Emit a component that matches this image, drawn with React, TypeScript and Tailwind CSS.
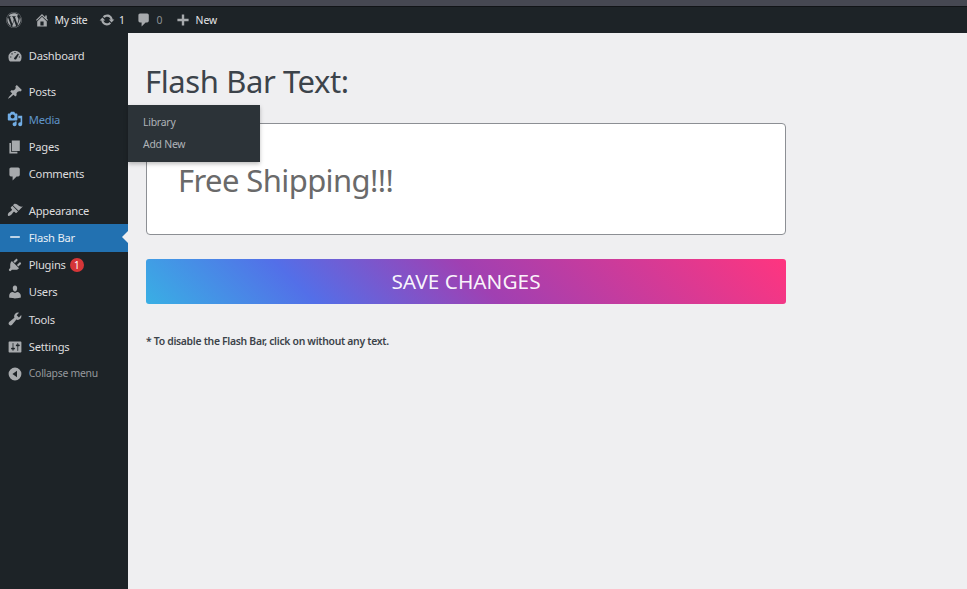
import { FaWordpress } from 'react-icons/fa';

const icons = {
  home: 'M16 8.5l1.53 1.53-1.06 1.06L10 4.6l-6.47 6.49-1.06-1.06L10 2.5l4 4v-2h2v4zm-6-2.46l6 5.99V18H4v-5.97zM12 17v-5H8v5h4z',
  update: 'M10.2 3.28c3.53 0 6.43 2.61 6.92 6h2.08l-3.5 4-3.5-4h2.32c-.45-1.97-2.21-3.45-4.32-3.45-1.45 0-2.73.71-3.54 1.78L4.95 5.66C6.23 4.2 8.11 3.28 10.2 3.28zm-.4 13.44c-3.52 0-6.43-2.61-6.92-6H.8l3.5-4c1.17 1.33 2.33 2.67 3.5 4H5.48c.45 1.97 2.21 3.45 4.32 3.45 1.45 0 2.73-.71 3.54-1.78l1.71 1.95c-1.28 1.46-3.15 2.38-5.25 2.38z',
  comments: 'M5 2h9c1.1 0 2 .9 2 2v7c0 1.1-.9 2-2 2h-2l-5 5v-5H5c-1.1 0-2-.9-2-2V4c0-1.1.9-2 2-2z',
  plus: 'M17 8.5v3h-5.5V17h-3v-5.5H3v-3h5.5V3h3v5.5z',
  dashboard: 'M3.76 17h12.48A8.2 8.2 0 1 0 3.76 17zM9.3 5h1.4v1.4H9.3zM5.6 6.7H7v1.4H5.6zM13.6 7L14.9 7.7 11.7 13.8A1.7 1.7 0 0 1 8.7 12.8zM4 10.6h1.4V12H4zM14.8 10.6h1.4V12h-1.4z',
  posts: 'M10.44 3.02l1.82-1.82 6.36 6.35-1.83 1.82c-1.05-.68-2.48-.57-3.41.36l-.75.75c-.92.93-1.04 2.35-.35 3.41l-1.83 1.82-2.41-2.41-2.8 2.79c-.42.42-3.38 2.71-3.8 2.29s1.86-3.39 2.28-3.81l2.79-2.79L4.1 9.36l1.83-1.82c1.05.69 2.48.57 3.4-.36l.75-.75c.93-.92 1.05-2.35.36-3.41z',
  media: 'M13 11V4c0-.55-.45-1-1-1h-1.67L9 1H5L3.67 3H2c-.55 0-1 .45-1 1v7c0 .55.45 1 1 1h10c.55 0 1-.45 1-1zM7 4.5c1.38 0 2.5 1.12 2.5 2.5S8.38 9.5 7 9.5 4.5 8.38 4.5 7 5.62 4.5 7 4.5zM14 6h5v10.5c0 1.38-1.12 2.5-2.5 2.5S14 17.88 14 16.5s1.12-2.5 2.5-2.5c.17 0 .34.02.5.05V9h-3V6zm-4 8.05V13h2v3.5c0 1.38-1.12 2.5-2.5 2.5S7 17.88 7 16.5 8.12 14 9.5 14c.17 0 .34.02.5.05z',
  pages: 'M6 15V2h10v13H6zm-1 1h8v2H3V5h2v11z',
  appearance: 'M14.48 11.06L7.41 3.99l1.5-1.5c.5-.56 2.3-.47 3.51.32 1.21.8 1.43 1.28 2.91 2.1 1.18.64 2.45 1.26 4.45.85zm-.71.71L6.7 4.7 4.93 6.47c-.39.39-.39 1.02 0 1.41l1.06 1.06c.39.39.39 1.03 0 1.42-.6.6-1.43 1.11-2.21 1.69-.35.26-.7.53-1.01.84C1.43 14.23.4 16.08 1.4 17.07c.99 1 2.84-.03 4.18-1.36.31-.31.58-.66.85-1.02.57-.78 1.08-1.61 1.69-2.21.39-.39 1.02-.39 1.41 0l1.06 1.06c.39.39 1.02.39 1.41 0z',
  minus: 'M4 9h12v2H4z',
  plugins: 'M13.11 4.36L9.87 7.6 8 5.73l3.24-3.24c.35-.34 1.05-.2 1.56.32.52.51.66 1.21.31 1.55zm-8 1.77l.91-1.12 9.01 9.01-1.19.84c-.71.71-2.63 1.16-3.82 1.16H6.14L4.9 17.26c-.59.59-1.54.59-2.12 0-.59-.58-.59-1.53 0-2.12l1.24-1.24v-3.88c0-1.13.4-3.19 1.09-3.89zm7.26 3.97l3.24-3.24c.34-.35 1.04-.21 1.55.31.52.51.66 1.21.31 1.55l-3.24 3.25z',
  users: 'M10 9.25c-2.27 0-2.73-3.44-2.73-3.44C7 4.02 7.82 2 9.97 2c2.16 0 2.98 2.02 2.71 3.81 0 0-.41 3.44-2.68 3.44zM10 11.2L12.72 10c2.39 0 4.52 2.33 4.52 4.53v2.49s-3.65 1.13-7.24 1.13c-3.65 0-7.24-1.13-7.24-1.13v-2.49c0-2.25 1.94-4.48 4.47-4.48z',
  tools: 'M16.68 9.77c-1.34 1.34-3.3 1.67-4.95.99l-5.41 6.52c-.99.99-2.59.99-3.58 0s-.99-2.59 0-3.57l6.52-5.42c-.68-1.65-.35-3.61.99-4.95 1.28-1.28 3.12-1.62 4.72-1.06l-2.89 2.89 2.82 2.82 2.86-2.87c.53 1.58.18 3.39-1.08 4.65z',
  settings: 'M18 16V4c0-.55-.45-1-1-1H3c-.55 0-1 .45-1 1v12c0 .55.45 1 1 1h14c.55 0 1-.45 1-1zM8 11h1c.55 0 1 .45 1 1s-.45 1-1 1H8v1.5c0 .28-.22.5-.5.5s-.5-.22-.5-.5V13H6c-.55 0-1-.45-1-1s.45-1 1-1h1V5.5c0-.28.22-.5.5-.5s.5.22.5.5V11zm5-2h-1c-.55 0-1-.45-1-1s.45-1 1-1h1V5.5c0-.28.22-.5.5-.5s.5.22.5.5V7h1c.55 0 1 .45 1 1s-.45 1-1 1h-1v5.5c0 .28-.22.5-.5.5s-.5-.22-.5-.5V9z',
  collapse: 'M10 2a8 8 0 1 0 0 16a8 8 0 1 0 0-16zM12.5 5.8v8.4L6.8 10z',
};

type IconName = keyof typeof icons;

function Icon({ name, className = '' }: { name: IconName; className?: string }) {
  return (
    <svg viewBox="0 0 20 20" fill="currentColor" fillRule="evenodd" className={`size-4 shrink-0 ${className}`}>
      <path d={icons[name]} />
    </svg>
  );
}

type Item = { icon: IconName; label: string; state?: 'hover' | 'current'; badge?: string };

const groups: Item[][] = [
  [{ icon: 'dashboard', label: 'Dashboard' }],
  [
    { icon: 'posts', label: 'Posts' },
    { icon: 'media', label: 'Media', state: 'hover' },
    { icon: 'pages', label: 'Pages' },
    { icon: 'comments', label: 'Comments' },
  ],
  [
    { icon: 'appearance', label: 'Appearance' },
    { icon: 'minus', label: 'Flash Bar', state: 'current' },
    { icon: 'plugins', label: 'Plugins', badge: '1' },
    { icon: 'users', label: 'Users' },
    { icon: 'tools', label: 'Tools' },
    { icon: 'settings', label: 'Settings' },
  ],
];

function MenuItem({ item }: { item: Item }) {
  const color =
    item.state === 'hover' ? 'text-[#72aee6]' : item.state === 'current' ? 'bg-[#2271b1] text-[#e6eef5]' : 'text-[#dcdcde]';
  const iconColor = item.state ? '' : 'text-[#a7aaad]';
  return (
    <li className={`relative flex h-[27.3px] items-center pl-[6.8px] ${color}`}>
      <Icon name={item.icon} className={`-mt-px ${iconColor}`} />
      <span className={`ml-[6px] pt-[0.6px] tracking-[-0.25px] ${item.state === 'hover' ? 'text-[#5f94c9]' : ''}`}>{item.label}</span>
      {item.badge && (
        <span className="ml-1 flex size-[14.4px] items-center justify-center rounded-full bg-[#d63638] text-[10px] text-white">
          {item.badge}
        </span>
      )}
      {item.state === 'current' && (
        <span className="absolute right-0 top-[7px] border-y-[6.4px] border-r-[6.4px] border-y-transparent border-r-[#efeff1]" />
      )}
      {item.state === 'hover' && (
        <ul className="absolute left-32 top-[-1.2px] z-10 flex h-[57px] w-[132px] flex-col bg-[#2c3338] pl-[15px] pt-[6px] text-[10.4px] leading-[22px] tracking-[-0.22px] text-[#b0b4b8] shadow-[0_2px_4px_rgba(0,0,0,0.25)]">
          <li>Library</li>
          <li>Add New</li>
        </ul>
      )}
    </li>
  );
}

export default function App() {
  return (
    <div className="flex h-[589px] w-[967px] flex-col overflow-hidden bg-[#efeff1] font-['Noto_Sans',sans-serif] text-[#3c434a]">
      <div className="h-[7px] shrink-0 border-b border-[#111417] bg-[#464852]" />
      <header className="flex h-[26px] shrink-0 items-center bg-[#1d2327] pl-[5.5px] text-[10.4px] text-[#e6e6e8]">
        <FaWordpress className="size-4 text-[#a7aaad]" />
        <Icon name="home" className="ml-[12px] text-[#a7aaad]" />
        <span className="ml-[5px] w-[33px] whitespace-nowrap pt-px tracking-[-0.25px]">My site</span>
        <Icon name="update" className="ml-[11.5px] text-[#a7aaad]" />
        <span className="ml-1 w-[6px] pt-px">1</span>
        <Icon name="comments" className="ml-[11px] text-[#a7aaad]" />
        <span className="ml-[4.5px] w-[6px] pt-px text-[#8c9094]">0</span>
        <Icon name="plus" className="ml-[12.5px] text-[#a7aaad]" />
        <span className="ml-[4.5px] pt-px">New</span>
      </header>
      <div className="flex min-h-0 flex-1">
        <nav className="flex w-32 shrink-0 flex-col gap-[9px] bg-[#1d2327] pt-[9.5px] text-[11.2px]">
          {groups.map((group, i) => (
            <ul key={i}>
              {group.map((item) => (
                <MenuItem key={item.label} item={item} />
              ))}
            </ul>
          ))}
          <div className="-mt-[9px] flex h-[27px] items-center pl-[6.8px] text-[10.4px] tracking-[-0.25px] text-[#96999d]">
            <Icon name="collapse" className="text-[#a7aaad]" />
            <span className="ml-[6px]">Collapse menu</span>
          </div>
        </nav>
        <main className="flex flex-1 flex-col items-start pl-[18px] pt-[26px]">
          <h1 className="-ml-px h-[64px] text-[31px] leading-[44px] tracking-[-0.4px]">Flash Bar Text:</h1>
          <div className="flex h-[112px] w-[640px] items-center rounded-[4px] border border-[#8c8f94] bg-white pt-[3px] pl-[31px] text-[31px] tracking-[-0.6px] text-[#6a6a6a]">
            <span>Free Shipping!!!</span>
          </div>
          <button className="mt-6 h-[45px] w-[640px] rounded-[3px] bg-[linear-gradient(45deg,#39afe4_0%,#536fe8_25%,#a040b2_52%,#ff357f_100%)] text-[20.8px] text-white/95">
            SAVE CHANGES
          </button>
          <p className="mt-[29px] text-[10.4px] leading-4 font-semibold tracking-[-0.3px]">
            * To disable the Flash Bar, click on without any text.
          </p>
        </main>
      </div>
    </div>
  );
}
